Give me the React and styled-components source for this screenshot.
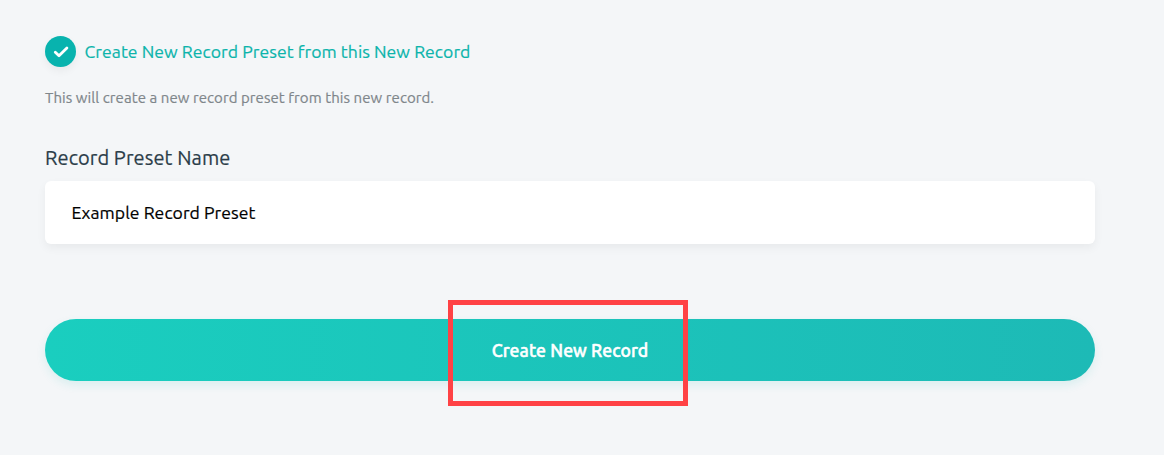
import React from "react";
import styled, { createGlobalStyle } from "styled-components";

const GlobalStyle = createGlobalStyle`
  *, *::before, *::after { box-sizing: border-box; }
  body {
    margin: 0;
    background: #f4f6f8;
    font-family: Ubuntu, "Noto Sans", sans-serif;
  }
`;

const Page = styled.main`
  min-height: 455px;
  padding: 36px 69px 0 45px;
  display: flex;
  flex-direction: column;
`;

const Toggle = styled.label`
  display: flex;
  align-items: center;
  gap: 8.5px;
  height: 31px;
`;

const CheckCircle = styled.span`
  display: flex;
  align-items: center;
  justify-content: center;
  width: 31px;
  height: 31px;
  border-radius: 50%;
  background: #08b3ae;
  box-shadow: 0 4px 8px rgba(0, 0, 0, 0.05);
`;

const Text = styled.span`
  white-space: nowrap;
  color: ${(p) => p.$color};
  font-size: ${(p) => p.$size}px;
  font-weight: ${(p) => p.$weight || 400};
  line-height: ${(p) => p.$line || 24}px;
  letter-spacing: ${(p) => p.$spacing || 0}px;
  -webkit-text-stroke: ${(p) => p.$stroke || 0.2}px currentColor;
`;

const Hint = styled.div`
  display: flex;
  margin-top: 19px;
  height: 24px;
`;

const Field = styled.div`
  display: flex;
  flex-direction: column;
  align-items: stretch;
  margin-top: 35px;
`;

const FieldLabel = styled.div`
  display: flex;
  height: 36px;
`;

const InputBox = styled.div`
  display: flex;
  align-items: center;
  height: 63px;
  padding: 0 26.5px;
  border-radius: 6px;
  background: #fff;
  box-shadow: 0 4px 10px rgba(0, 0, 0, 0.05);
`;

const SubmitButton = styled.button`
  position: relative;
  display: flex;
  align-items: center;
  justify-content: center;
  height: 62px;
  margin-top: 75px;
  padding: 1px 0 0;
  border: 0;
  border-radius: 31px;
  background: linear-gradient(90deg, #1acebf, #1dbab6);
  box-shadow: 0 4px 10px rgba(29, 190, 184, 0.12);
  font-family: inherit;
`;

const Highlight = styled.span`
  position: absolute;
  left: 403px;
  top: -19px;
  width: 240px;
  height: 106px;
  border: 5px solid #ff4245;
  pointer-events: none;
`;

export default function App() {
  return (
    <>
      <GlobalStyle />
      <Page>
        <Toggle>
          <CheckCircle>
            <svg width="31" height="31" viewBox="0 0 31 31" fill="none">
              <path
                d="M10.3 16.2 L14 19.8 L21.9 12"
                stroke="#fff"
                strokeWidth="2.8"
                strokeLinecap="round"
                strokeLinejoin="round"
              />
            </svg>
          </CheckCircle>
          <Text $color="#0cb4ab" $size={17.6} $spacing={0.05}>
            Create New Record Preset from this New Record
          </Text>
        </Toggle>
        <Hint>
          <Text $color="#7f868b" $size={15} $spacing={0.07}>
            This will create a new record preset from this new record.
          </Text>
        </Hint>
        <Field>
          <FieldLabel>
            <Text $color="#2b3d49" $size={20} $line={26} $spacing={0.09}>
              Record Preset Name
            </Text>
          </FieldLabel>
          <InputBox>
            <Text $color="#000" $size={17.6} $spacing={0.05}>
              Example Record Preset
            </Text>
          </InputBox>
        </Field>
        <SubmitButton type="button">
          <Text $color="#fff" $size={17.6} $weight={500} $spacing={0.08} $stroke={0.5}>
            Create New Record
          </Text>
          <Highlight />
        </SubmitButton>
      </Page>
    </>
  );
}
